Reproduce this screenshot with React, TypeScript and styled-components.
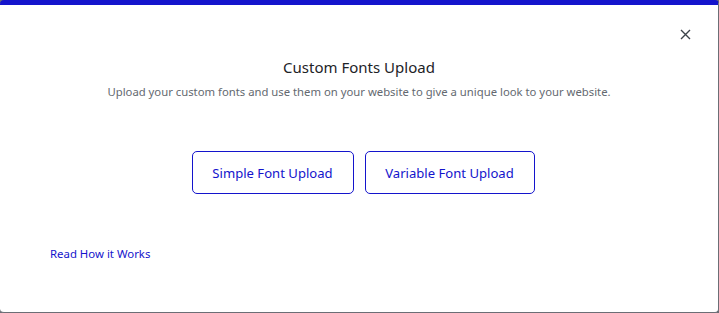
import styled, { createGlobalStyle } from "styled-components";

const GlobalStyle = createGlobalStyle`
   html, body {
      margin: 0;
      padding: 0;
      background: #6b6e75;
   }
   body {
      font-family: "Noto Sans", "Open Sans", sans-serif;
   }
`;

const Modal = styled.div`
   box-sizing: border-box;
   width: 719px;
   height: 313px;
   background: #fff;
   border-top: 5px solid #1414cc;
   border-radius: 4px;
   border-right: 1px solid #6b6e75;
   border-bottom: 1px solid #6b6e75;
   display: flex;
   flex-direction: column;
   padding: 22px 0 0 0;
`;

const TopBar = styled.div`
   display: flex;
   justify-content: flex-end;
   padding-right: 26px;
   height: 14px;
`;

const CloseButton = styled.button`
   border: none;
   background: none;
   padding: 0;
   width: 14px;
   height: 14px;
   display: flex;
   align-items: center;
   justify-content: center;
   cursor: pointer;
`;

const Header = styled.div`
   display: flex;
   flex-direction: column;
   align-items: center;
   margin-top: 16px;
`;

const Title = styled.h2`
   margin: 0;
   font-size: 15px;
   font-weight: 400;
   color: #1d2327;
   line-height: 20px;
`;

const Subtitle = styled.p`
   margin: 6px 0 0;
   font-size: 11.3px;
   color: #646970;
   line-height: 18px;
`;

const Actions = styled.div`
   display: flex;
   justify-content: center;
   gap: 11px;
   margin-top: 50px;
   padding-left: 8px;
`;

const UploadButton = styled.button<{ $width: number }>`
   box-sizing: border-box;
   width: ${(p) => p.$width}px;
   height: 43px;
   background: #fff;
   border: 1px solid #1414cc;
   border-radius: 5px;
   color: #1414cc;
   font-family: inherit;
   font-size: 13.1px;
   cursor: pointer;
`;

const Footer = styled.div`
   margin-top: 47px;
   padding-left: 50px;
`;

const HelpLink = styled.a`
   font-size: 11.4px;
   color: #1414cc;
   text-decoration: none;
`;

export default function App() {
   return (
      <>
         <GlobalStyle />
         <Modal>
            <TopBar>
               <CloseButton aria-label="Close">
                  <svg width="11" height="11" viewBox="0 0 11 11">
                     <path
                        d="M1 1 L10 10 M10 1 L1 10"
                        stroke="#3c434a"
                        strokeWidth="1.4"
                     />
                  </svg>
               </CloseButton>
            </TopBar>
            <Header>
               <Title>Custom Fonts Upload</Title>
               <Subtitle>
                  Upload your custom fonts and use them on your website to give
                  a unique look to your website.
               </Subtitle>
            </Header>
            <Actions>
               <UploadButton $width={162}>Simple Font Upload</UploadButton>
               <UploadButton $width={170}>Variable Font Upload</UploadButton>
            </Actions>
            <Footer>
               <HelpLink href="#">Read How it Works</HelpLink>
            </Footer>
         </Modal>
      </>
   );
}
